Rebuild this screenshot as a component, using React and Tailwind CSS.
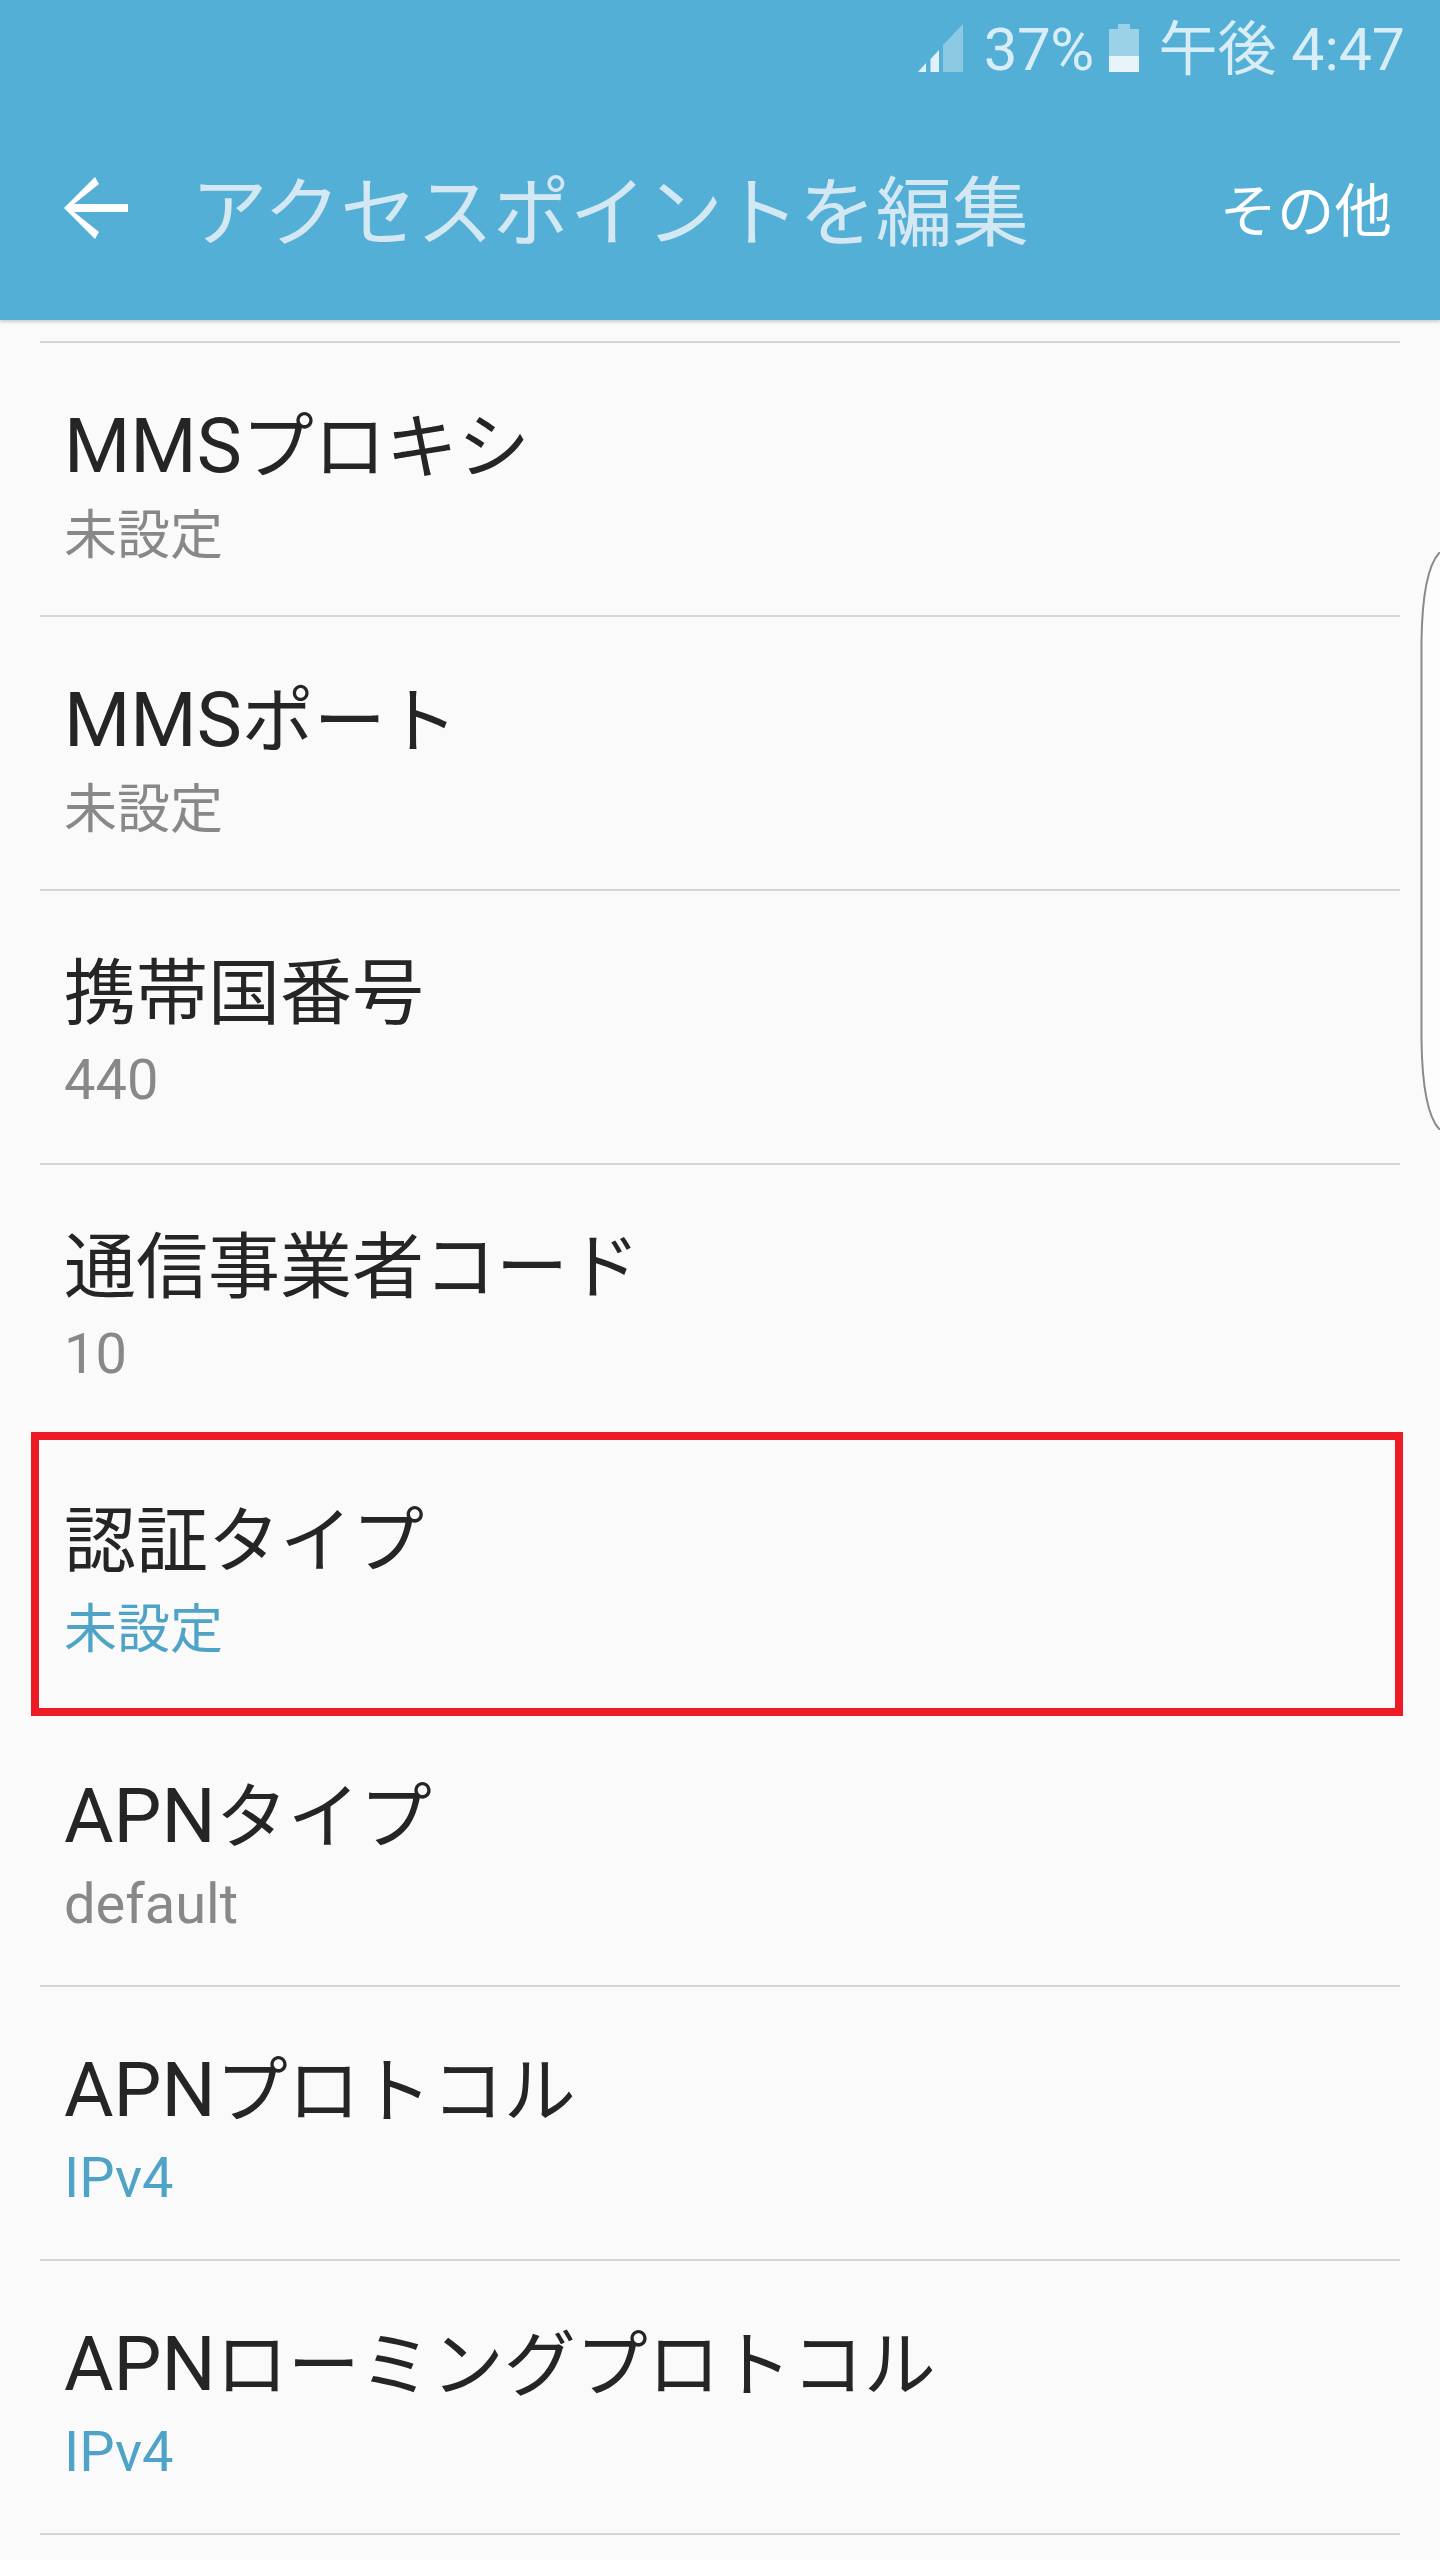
import React from 'react';

const rows = [
  { latin: 'MMS', title: 'プロキシ', value: '未設定' },
  { latin: 'MMS', title: 'ポート', value: '未設定' },
  { title: '携帯国番号', value: '440' },
  { title: '通信事業者コード', value: '10' },
  { title: '認証タイプ', value: '未設定', accent: true, boxed: true },
  { latin: 'APN', title: 'タイプ', value: 'default' },
  { latin: 'APN', title: 'プロトコル', value: 'IPv4', accent: true },
  { latin: 'APN', title: 'ローミングプロトコル', value: 'IPv4', accent: true },
];

const StatusBar = () => (
  <div className="flex h-[104px] items-start justify-end pr-[35px] text-[#d8edf6] text-[60px] leading-[72px]">
    <svg className="mt-[24px] h-[48px] w-[45px] shrink-0" viewBox="0 0 45 48">
      <path d="M25 21 L45 0 V48 H25 Z" fill="#8ccae3" />
      <path d="M0 48 L8 39 V48 Z" fill="#e0f1f8" />
      <path d="M12.5 35 L21 26 V48 H12.5 Z" fill="#e0f1f8" />
    </svg>
    <span className="ml-[21px] mt-[14px] tracking-[-0.5px]">37%</span>
    <svg className="ml-[15px] mt-[24px] h-[48px] w-[30px] shrink-0" viewBox="0 0 30 48">
      <path d="M9 0 H21 V5 H30 V32 H0 V5 H9 Z" fill="#9bd2e7" />
      <rect x="0" y="32" width="30" height="16" fill="#e6f4fa" />
    </svg>
    <span className="ml-[20px] mt-[14px] text-[59px]">午後 4:47</span>
  </div>
);

const Row = ({ latin, title, value, accent, boxed }) => (
  <div className="relative h-[274px]">
    <div className="h-[272px] pl-[64px] pt-[58px]">
      <div className="text-[72px] leading-[90px] text-[#252525]">
        {latin && <span className="text-[76px]">{latin}</span>}
        {title}
      </div>
      <div
        className={`leading-[70px] ${value === '未設定' ? 'mt-[8px] text-[53px]' : 'mt-[6px] text-[56px]'} ${accent ? 'text-[#4fa3c6]' : 'text-[#888888]'}`}
      >
        {value}
      </div>
    </div>
    <div className="ml-[40px] mr-[40px] h-[2px] bg-[#d6d6d6]" />
    {boxed && <div className="absolute left-[31px] right-[37px] top-[-7px] h-[284px] border-[8px] border-[#ed1c24]" />}
  </div>
);

const App = () => {
  return (
    <div
      className="relative h-[2560px] w-[1440px] overflow-hidden bg-[#fafafa]"
      style={{ fontFamily: 'Roboto, "Noto Sans CJK JP", sans-serif' }}
    >
      <header className="relative z-10 h-[320px] bg-[#53afd6] shadow-[0_2px_3px_rgba(0,0,0,0.18)]">
        <StatusBar />
        <div className="flex h-[208px] items-start">
          <svg className="ml-[64px] mt-[73px] h-[62px] w-[64px] shrink-0" viewBox="0 0 64 62">
            <path d="M31 0 L35 7 L10 27 H64 V35 H10 L35 55 L31 62 L0 31 Z" fill="#ffffff" />
          </svg>
          <h1 className="ml-[63px] mt-[58px] text-[76.5px] font-normal leading-[104px] text-[#d3e8f3]">アクセスポイントを編集</h1>
          <span className="ml-auto mr-[48px] mt-[65px] text-[57.5px] leading-[88px] text-white">その他</span>
        </div>
      </header>

      <div className="h-[21px]" />
      <div className="ml-[40px] mr-[40px] h-[2px] bg-[#d6d6d6]" />
      {rows.map((row) => (
        <Row key={row.latin + row.title} {...row} />
      ))}

      <svg className="absolute right-0 top-[552px] h-[578px] w-[20px]" viewBox="0 0 20 578" fill="none">
        <path d="M20 0 C6 14 2 50 1.5 90 V488 C2 528 6 564 20 578 Z" fill="#fdfdfd" />
        <path d="M20 0 C6 14 2 50 1.5 90 V488 C2 528 6 564 20 578" stroke="#8a8a8a" strokeWidth="2" />
      </svg>
    </div>
  );
};

export default App;
